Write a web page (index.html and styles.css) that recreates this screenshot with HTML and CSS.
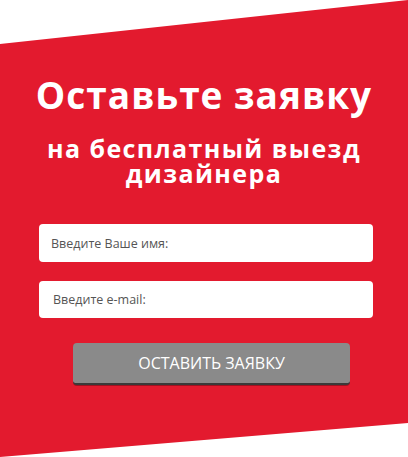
FILE: index.html
```html
<!DOCTYPE html>
<html lang="ru">
<head>
<meta charset="utf-8">
<link rel="stylesheet" href="styles.css">
</head>
<body>
<div class="panel">
  <h1 class="title">Оставьте заявку</h1>
  <p class="subtitle">на бесплатный выезд<br>дизайнера</p>
  <form class="form">
    <input class="field" type="text" placeholder="Введите Ваше имя:">
    <input class="field field-email" type="text" placeholder="Введите e-mail:">
    <button class="btn" type="button">Оставить заявку</button>
  </form>
</div>
</body>
</html>
```
FILE: styles.css
```css
html, body {
  margin: 0;
  padding: 0;
  background: #ffffff;
}
.panel {
  width: 408px;
  height: 457px;
  background: #e31a2e;
  clip-path: polygon(0 44px, 408px 0, 408px 423px, 0 457px);
  box-sizing: border-box;
  padding-top: 71px;
  display: flex;
  flex-direction: column;
  align-items: center;
  font-family: "Open Sans", "Noto Sans", sans-serif;
}
.title {
  margin: 0;
  color: #fff;
  font-size: 37px;
  font-weight: 700;
  line-height: 48px;
  letter-spacing: 1px;
  white-space: nowrap;
}
.subtitle {
  margin: 17px 0 0;
  color: #fff;
  font-size: 25px;
  font-weight: 700;
  line-height: 25px;
  letter-spacing: 1.4px;
  text-align: center;
  white-space: nowrap;
}
.form {
  margin-top: 38px;
  margin-left: 4px;
  display: flex;
  flex-direction: column;
  align-items: center;
  width: 334px;
}
.field {
  width: 334px;
  height: 38px;
  box-sizing: border-box;
  border: none;
  border-radius: 4px;
  background: #fff;
  padding: 0 12px;
  font-family: "Open Sans", "Noto Sans", sans-serif;
  font-size: 12.5px;
  color: #555;
  margin-bottom: 19px;
  outline: none;
}
.field-email {
  height: 37px;
  padding-left: 14px;
}
.field::placeholder {
  color: #555;
  opacity: 1;
}
.btn {
  margin-top: 6px;
  margin-left: 11px;
  width: 277px;
  height: 42px;
  border: none;
  border-radius: 4px;
  background: #8a8a8a;
  border-bottom: 2px solid #3a3a3a;
  box-shadow: 0 1px 0 rgba(0,0,0,0.3);
  color: #fff;
  font-family: "Open Sans", "Noto Sans", sans-serif;
  font-size: 16px;
  text-transform: uppercase;
  cursor: pointer;
}
```
